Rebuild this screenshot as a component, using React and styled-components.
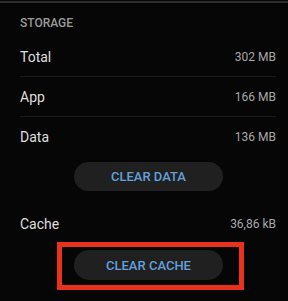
import React from "react";
import styled, { createGlobalStyle } from "styled-components";

const Global = createGlobalStyle`
  html, body {
    margin: 0;
    padding: 0;
    background: #060606;
  }
  body {
    font-family: Roboto, "Liberation Sans", sans-serif;
  }
`;

const rows = [
  { label: "Total", value: "302 MB", divider: true },
  { label: "App", value: "166 MB", divider: true },
  { label: "Data", value: "136 MB" },
];

const App = () => {
  return (
    <Page>
      <Global />
      <TopLine />
      <Header>STORAGE</Header>
      {rows.map((r) => (
        <Row key={r.label} $divider={r.divider}>
          <Label>{r.label}</Label>
          <Value>{r.value}</Value>
        </Row>
      ))}
      <DataButton>CLEAR DATA</DataButton>
      <CacheRow>
        <Label>Cache</Label>
        <Value>36,86 kB</Value>
      </CacheRow>
      <Highlight>
        <Button>CLEAR CACHE</Button>
      </Highlight>
    </Page>
  );
};

export default App;

const Page = styled.div`
  width: 288px;
  height: 301px;
  background: #060606;
  overflow: hidden;
`;

const TopLine = styled.div`
  height: 2px;
  margin-top: 1px;
  background: #2c2c2c;
`;

const Header = styled.div`
  height: 34px;
  box-sizing: border-box;
  padding: 13px 0 0 20px;
  font-size: 12px;
  line-height: 14px;
  font-weight: 500;
  color: #9a9a9a;
`;

const Row = styled.div`
  display: flex;
  justify-content: space-between;
  align-items: center;
  height: 40px;
  margin: 0 12px 0 20px;
  box-sizing: border-box;
  border-bottom: 1px solid ${(p) => (p.$divider ? "#1b1b1b" : "transparent")};
`;

const CacheRow = styled(Row)`
  height: 37px;
  margin-top: 14px;
  border-bottom: none;
`;

const Label = styled.span`
  font-size: 14px;
  color: #dedede;
`;

const Value = styled.span`
  font-size: 12px;
  color: #a8a8a8;
`;

const Button = styled.div`
  display: flex;
  align-items: center;
  justify-content: center;
  width: 149px;
  height: 30px;
  border-radius: 15px;
  background: #202020;
  color: #64a0dc;
  font-size: 13px;
  font-weight: 500;
`;

const DataButton = styled(Button)`
  margin: 5px 0 0 74px;
  height: 29px;
`;

const Highlight = styled.div`
  width: 187px;
  height: 48px;
  box-sizing: border-box;
  margin-left: 57px;
  border: 5px solid #e8321e;
  padding: 3px 0 0 12px;
`;
